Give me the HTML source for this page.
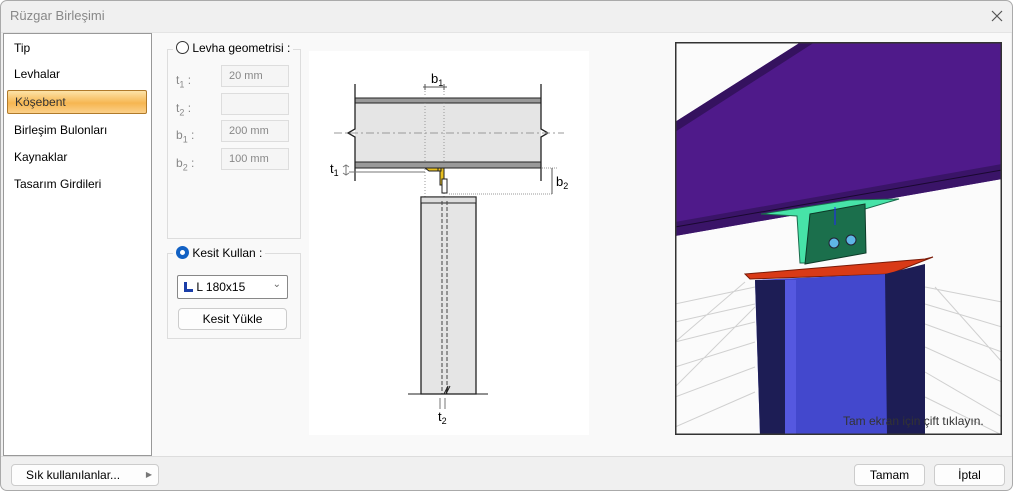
<!DOCTYPE html>
<html><head><meta charset="utf-8"><style>
*{margin:0;padding:0;box-sizing:border-box}
body{width:1013px;height:491px;overflow:hidden;background:#fff;font-family:"Liberation Sans",sans-serif;font-size:12px;color:#000;position:relative}
.win{position:absolute;left:0;top:0;width:1013px;height:491px;border:1px solid #aaa;border-radius:7px;background:#f0f0f0;overflow:hidden}
.a{position:absolute}
.nav div{position:absolute;left:10px;font-size:12px}
.fld{position:absolute;left:220px;width:68px;height:22px;border:1px solid #ddd;background:#f5f5f5;color:#888;font-size:11px;padding:4px 7px}
.lbl{position:absolute;left:175px;color:#888;font-size:12px}
.btn{position:absolute;height:22px;border:1px solid #ccc;border-radius:4px;background:#fdfdfd;font-size:12px;text-align:center;line-height:20px}
</style></head><body>
<div class="win">
<div class="a" style="left:9px;top:7px;color:#888;font-size:13px">Rüzgar Birleşimi</div>
<svg class="a" style="left:990px;top:9px" width="12" height="12"><path d="M1 1L11 11M11 1L1 11" stroke="#555" stroke-width="1.2"/></svg>
<div class="a" style="left:0;top:31px;width:1013px;height:1px;background:#e4e4e4"></div>
<div class="a" style="left:151px;top:32px;width:859px;height:423px;background:#f9f9f9"></div>
<div class="a nav" style="left:2px;top:32px;width:149px;height:423px;background:#fff;border:1px solid #999">
<div style="top:7px">Tip</div>
<div style="top:33px">Levhalar</div>
<div style="top:56px;left:3px;width:140px;height:24px;border:1px solid #b07a2a;border-radius:2px;background:linear-gradient(#fde3a8,#f6b651 55%,#fbd089);padding:4px 7px;color:#333">Köşebent</div>
<div style="top:89px">Birleşim Bulonları</div>
<div style="top:116px">Kaynaklar</div>
<div style="top:143px">Tasarım Girdileri</div>
</div>
<div class="a" style="left:166px;top:48px;width:134px;height:190px;border:1px solid #ddd"></div>
<div class="a" style="left:172px;top:40px;background:#f9f9f9;padding:0 3px;font-size:12px"><span style="display:inline-block;width:13px;height:13px;border:1px solid #333;border-radius:50%;vertical-align:-2px;background:#fff"></span> Levha geometrisi :</div>
<div class="lbl" style="top:72px">t<sub style="font-size:9px">1</sub> :</div>
<div class="lbl" style="top:100px">t<sub style="font-size:9px">2</sub> :</div>
<div class="lbl" style="top:127px">b<sub style="font-size:9px">1</sub> :</div>
<div class="lbl" style="top:155px">b<sub style="font-size:9px">2</sub> :</div>
<div class="fld" style="top:64px">20 mm</div>
<div class="fld" style="top:92px"></div>
<div class="fld" style="top:119px">200 mm</div>
<div class="fld" style="top:147px">100 mm</div>
<div class="a" style="left:166px;top:252px;width:134px;height:86px;border:1px solid #ddd"></div>
<div class="a" style="left:172px;top:245px;background:#f9f9f9;padding:0 3px;font-size:12px"><span style="display:inline-block;width:13px;height:13px;border:4px solid #1261c4;border-radius:50%;vertical-align:-2px;background:#fff"></span> Kesit Kullan :</div>
<div class="a" style="left:176px;top:274px;width:111px;height:24px;border:1px solid #888;background:#fff;border-radius:2px;font-size:12px;padding:4px 6px"><span style="display:inline-block;width:9px;height:10px;border-left:3px solid #1b3ea8;border-bottom:3px solid #1b3ea8;vertical-align:-1px"></span> L 180x15<span style="position:absolute;right:6px;top:3px;color:#666;font-size:10px">&#8964;</span></div>
<div class="btn" style="left:177px;top:307px;width:109px">Kesit Yükle</div>
<svg class="a" style="left:308px;top:50px" width="280" height="384">
<rect width="280" height="384" fill="#fff"/>
<rect x="46" y="47" width="186" height="70" fill="#e5e5e5"/>
<rect x="46" y="47" width="186" height="5" fill="#999" stroke="#222"/>
<rect x="46" y="111" width="186" height="6" fill="#999" stroke="#222"/>
<path d="M46 33V78l-7 4 7 4V130M232 33V78l7 4-7 4V130" fill="none" stroke="#222" stroke-width="1.3"/>
<path d="M25 82H255" stroke="#999" stroke-dasharray="8 3 2 3"/>
<path d="M116 34V150M135 34V150" stroke="#999" stroke-dasharray="1 2"/>
<path d="M114 36H138M116 33v6M135 33v6" stroke="#555"/>
<text x="122" y="32" font-size="13" font-family="Liberation Sans">b<tspan font-size="9" dy="3">1</tspan></text>
<path d="M116 117H132V120H120z M129 117h6v17h-4v-14h-2z" fill="#e8c020" stroke="#222"/>
<rect x="133" y="128" width="5" height="14" fill="#fff" stroke="#222"/>
<path d="M37 114V124M34 116l3-2 3 2M34 122l3 2 3-2M40 121H116" stroke="#777" fill="none"/>
<text x="21" y="122" font-size="13" font-family="Liberation Sans">t<tspan font-size="9" dy="3">1</tspan></text>
<path d="M243 117V143M140 143H243M233 117H248" stroke="#999" stroke-dasharray="1 1"/>
<path d="M243 117V143" stroke="#555"/>
<text x="247" y="135" font-size="13" font-family="Liberation Sans">b<tspan font-size="9" dy="3">2</tspan></text>
<rect x="112" y="146" width="55" height="197" fill="#e5e5e5" stroke="#222" stroke-width="1.3"/>
<rect x="112" y="146" width="55" height="6" fill="#ddd" stroke="#222"/>
<path d="M133 150V343M138 150V343" stroke="#444" stroke-dasharray="4 2"/>
<path d="M99 343H179" stroke="#222"/>
<path d="M135 343l4-8-2 8 4-8" stroke="#222" fill="none"/>
<path d="M131 347V358M136 347V358" stroke="#777"/>
<text x="129" y="370" font-size="13" font-family="Liberation Sans">t<tspan font-size="9" dy="3">2</tspan></text>
</svg>
<svg class="a" style="left:674px;top:41px" width="327" height="393">
<rect width="327" height="393" fill="#fbfbfb"/>
<g stroke="#d0d0d0" fill="none" stroke-width="1">
<path d="M0 262L80 245M0 280L80 262M0 300L80 280M0 325L80 300M0 355L80 325M0 385L80 350M0 300L70 240M0 345L80 265"/>
<path d="M250 245L327 260M250 262L327 285M250 282L327 310M250 305L327 340M250 330L327 375M250 355L327 393M260 245L327 320"/>
</g>
<path d="M0 80L126 0H327V137L0 194Z" fill="#4f1a8a"/>
<path d="M0 80L126 0H140L0 90Z" fill="#35125f"/>
<path d="M0 180L327 122V137L0 194Z" fill="#3a1468"/>
<path d="M0 185L327 128" stroke="#1a0830" stroke-width="1"/>
<path d="M86 172L175 158 224 157 190 167 135 172 132 221 125 221 122 174Z" fill="#47e3a8" stroke="#1b6b4d"/>
<path d="M135 172L190 162 191 211 130 222Z" fill="#1b6f4c" stroke="#0d3a28"/>
<path d="M160 165V183" stroke="#22f" />
<circle cx="159" cy="201" r="5" fill="#5fb6e6" stroke="#223"/>
<circle cx="176" cy="198" r="5" fill="#5fb6e6" stroke="#223"/>
<path d="M70 232L250 217 258 215 215 232 75 237Z" fill="#d93a17" stroke="#7a1b08"/>
<path d="M80 238L212 232V393H85Z" fill="#4348cd"/>
<path d="M80 238H110V393H85Z" fill="#1d1d55"/>
<path d="M110 238H121V393H110Z" fill="#5558e0"/>
<path d="M210 232L250 222V393H212Z" fill="#1d1d55"/>
<text x="168" y="383" font-size="12" font-family="Liberation Sans" fill="#333">Tam ekran için çift tıklayın.</text>
<rect x="0.5" y="0.5" width="326" height="392" fill="none" stroke="#333" stroke-width="2"/>
</svg>
<div class="a" style="left:0;top:455px;width:1013px;height:1px;background:#ddd"></div>
<div class="btn" style="left:10px;top:463px;width:148px;text-align:left;padding-left:14px">Sık kullanılanlar...<span style="position:absolute;right:6px;color:#777;font-size:8px">&#9654;</span></div>
<div class="btn" style="left:853px;top:463px;width:71px">Tamam</div>
<div class="btn" style="left:933px;top:463px;width:71px">İptal</div>
</div>
</body></html>
